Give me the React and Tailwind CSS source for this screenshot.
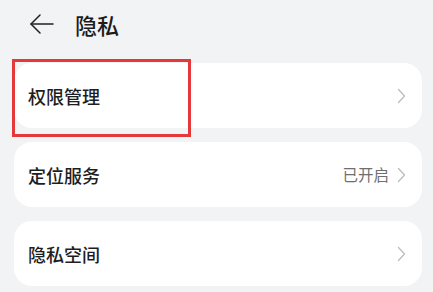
const items = [
  { name: "权限管理", value: "", marked: true },
  { name: "定位服务", value: "已开启" },
  { name: "隐私空间", value: "" },
];

const Chevron = () => (
  <svg width="9" height="16" viewBox="0 0 9 16" fill="none" stroke="#bdbdbd" strokeWidth="1.3" strokeLinecap="round" strokeLinejoin="round">
    <path d="M1.5 1.5L7.5 8L1.5 14.5" />
  </svg>
);

const App = () => {
  return (
    <div
      className="w-[433px] h-[292px] bg-[#f1f3f5] overflow-hidden"
      style={{ fontFamily: '"Noto Sans CJK SC", "Noto Sans", sans-serif' }}
    >
      <div className="h-[47px] flex items-center pl-[29px]">
        <svg width="25" height="22" viewBox="0 0 25 22" fill="none" stroke="#222" strokeWidth="1.5" strokeLinecap="round" strokeLinejoin="round">
          <path d="M24 11H2" />
          <path d="M11 2L2 11L11 20" />
        </svg>
        <h1 className="ml-[21px] text-[22px] font-medium text-[#1c1c1c] leading-none">隐私</h1>
      </div>

      <div className="flex flex-col gap-[14px] pl-[14px] pr-[11px] pt-[16px]">
        {items.map((item) => (
          <div
            key={item.name}
            className="relative h-[65px] bg-white rounded-[18px] flex items-center pl-[14px] pr-[16px]"
          >
            <span className="text-[18px] font-medium text-[#1e1e1e] leading-none">{item.name}</span>
            <div className="ml-auto flex items-center gap-[8px]">
              {item.value && (
                <span className="text-[15.5px] text-[#6f6f6f] leading-none">{item.value}</span>
              )}
              <Chevron />
            </div>
            {item.marked && (
              <div className="absolute -left-[2px] -top-[4px] w-[179px] h-[78px] border-[3px] border-[#e5383b]" />
            )}
          </div>
        ))}
      </div>
    </div>
  );
};

export default App;
